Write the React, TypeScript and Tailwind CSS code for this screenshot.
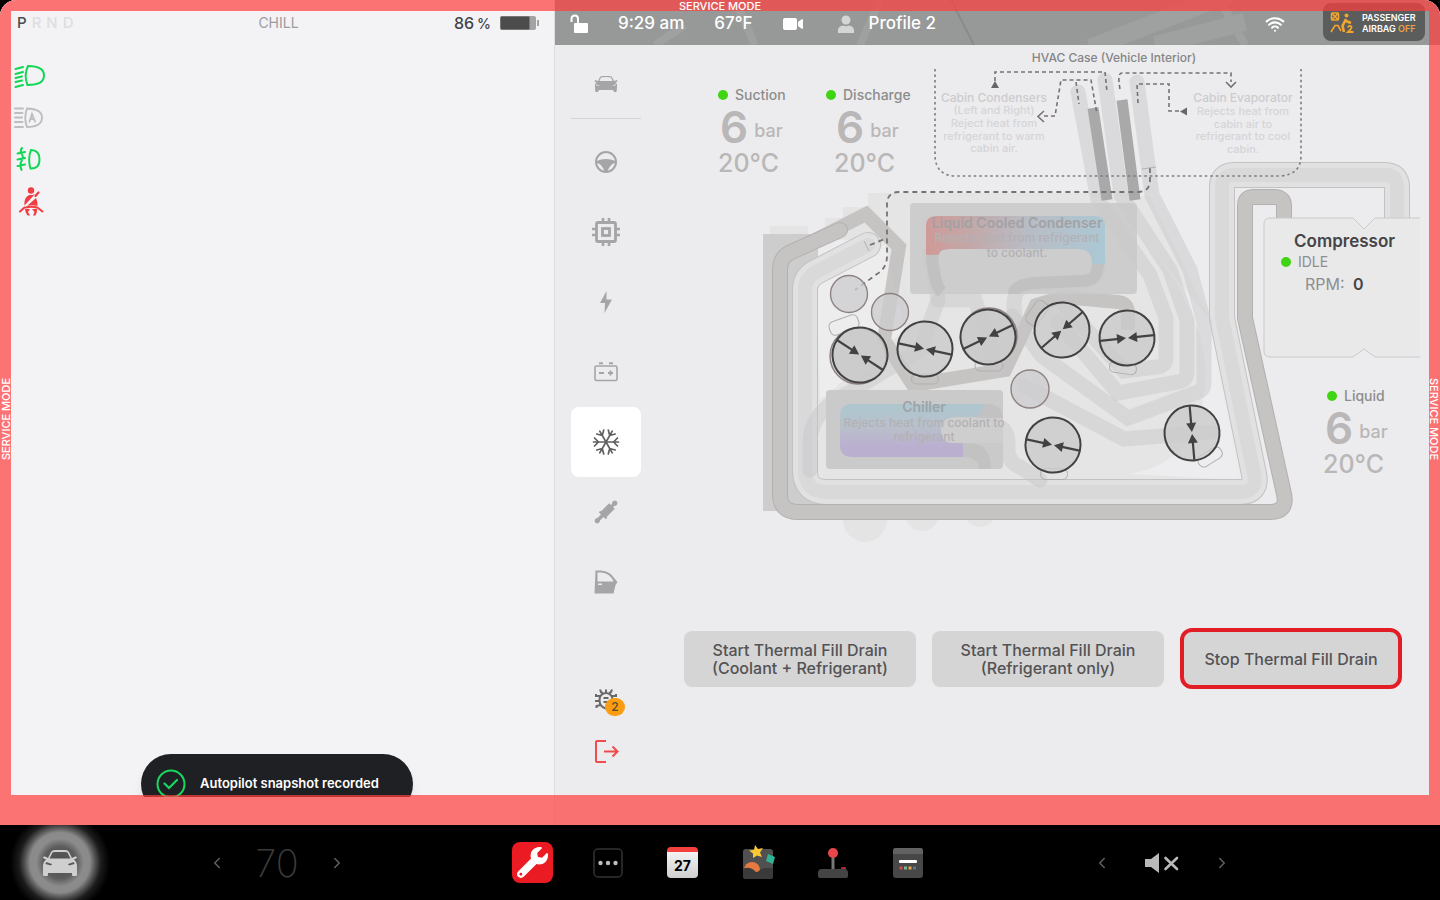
import React, { useState } from "react";
import { ChevronLeft, ChevronRight, Wifi } from "lucide-react";
import { FaWrench } from "react-icons/fa";

interface Valve {
	x: number;
	y: number;
	angle: number;
}

interface Tab {
	x: number;
	y: number;
	w: number;
	h: number;
	angle: number;
}

interface ReadingProps {
	label: string;
	pressure: number;
	temperature: string;
	className: string;
	valueClassName: string;
}

const valves: Valve[] = [
	{ x: 860, y: 355, angle: 33 },
	{ x: 925, y: 349, angle: 12 },
	{ x: 988, y: 337, angle: -26 },
	{ x: 1062, y: 330, angle: -41 },
	{ x: 1127, y: 338, angle: -6 },
	{ x: 1053, y: 445, angle: 12 },
	{ x: 1192, y: 433, angle: 85 },
];

const tabs: Tab[] = [
	{ x: 844, y: 325, w: 30, h: 14, angle: -20 },
	{ x: 925, y: 379, w: 27, h: 10, angle: 0 },
	{ x: 989, y: 366, w: 28, h: 10, angle: 0 },
	{ x: 1037, y: 313, w: 26, h: 14, angle: -55 },
	{ x: 1123, y: 368, w: 27, h: 11, angle: 8 },
	{ x: 1054, y: 474, w: 27, h: 11, angle: 0 },
	{ x: 1210, y: 457, w: 26, h: 12, angle: -32 },
];

const coolantLines = [
	"M1078 92 L1098 200 L1150 275 L1166 318 V358 Q1166 366 1157 367 L1124 371 L1062 302",
	"M1105 80 L1121 195 L1170 270 L1187 320 V372 Q1187 380 1178 382 L1118 393 L1058 322",
	"M1137 82 L1152 195 L1190 270 L1204 322 V382 Q1204 391 1195 393 L1128 418 L1042 356 L1012 316",
	"M1024 386 L1124 439 L1212 432",
	"M930 252 L938 300 L920 350 L850 392 Q812 410 810 440 V470",
	"M975 425 H992 Q1008 425 1008 445 V450 Q1008 462 1020 467 L1040 480",
	"M938 300 H975 L998 370",
	"M1100 262 Q1100 282 1080 282 L1030 285 Q1014 286 1014 305 L1016 330",
];

const lowPressureLine =
	"M868 245 L816 272 Q805 278 805 290 V470 Q805 492 827 492 H1240 Q1258 492 1254 474 L1222 318 V187 Q1222 175 1234 175 H1385 Q1397 175 1397 187 V240";
const highPressureLine =
	"M840 230 L789 253 Q780 258 780 270 V494 Q780 512 798 512 H1270 Q1288 512 1284 494 L1245 318 V205 Q1245 197 1254 197 H1274 Q1284 197 1284 206 V240";

function CarIcon({ className }: { className?: string }) {
	return (
		<svg viewBox="0 0 36 28" fill="currentColor" fillRule="evenodd" className={className} aria-hidden="true">
			<path d="M9 3 Q10 1 13 1 H23 Q26 1 27 3 L30 9 L33 7.500 Q35 7 35 9 L32 10.500 Q35 13 35 16 V26 Q35 27 34 27 H31 Q30 27 30 26 V24 H6 V26 Q6 27 5 27 H2 Q1 27 1 26 V16 Q1 13 4 10.500 L1 9 Q1 7 3 7.500 L6 9 Z M10.500 3.500 L7.500 9.500 H28.500 L25.500 3.500 Q25 3 23 3 H13 Q11 3 10.500 3.500 Z M4 13 L3.500 15 L9 16.500 L10 15 Z M32 13 L32.500 15 L27 16.500 L26 15 Z" />
		</svg>
	);
}

function SideCarIcon() {
	return (
		<svg viewBox="0 0 24 18" className="w-6" fill="currentColor" fillRule="evenodd" aria-hidden="true">
			<path d="M6 2 Q7 1 9 1 H15 Q17 1 18 2 L20 6 L23 5 L23.500 6.500 L21.500 7.500 L23 9 V13 L22.500 17 H20 L19 15 H5 L4 17 H1.500 L1 13 V9 L2.500 7.500 L.5 6.500 L1 5 L4 6 Z M7 2.500 L5.500 6 H18.500 L17 2.500 Q12 1.500 7 2.500 Z M2 9 L2.500 10.500 L6 11 Z M22 9 L21.500 10.500 L18 11 Z" />
		</svg>
	);
}

function SteeringIcon() {
	return (
		<svg viewBox="0 0 24 24" className="w-6" fill="none" stroke="currentColor" aria-hidden="true">
			<circle cx="12" cy="12" r="10" strokeWidth="2" />
			<path d="M2.500 11 Q12 7 21.500 11 V13 Q16.500 13 13.500 21.500 H10.500 Q7.500 13 2.500 13 Z" fill="currentColor" stroke="none" />
		</svg>
	);
}

function ChipIcon() {
	return (
		<svg viewBox="0 0 28 28" className="w-7" fill="none" stroke="currentColor" aria-hidden="true">
			<rect x="4.500" y="4.500" width="19" height="19" rx="1.500" strokeWidth="2.800" />
			<rect x="10.500" y="10.500" width="7" height="7" strokeWidth="2.800" />
			<path d="M11 0 V4 M17 0 V4 M11 24 V28 M17 24 V28 M0 11 H4 M0 17 H4 M24 11 H28 M24 17 H28" strokeWidth="2.600" />
		</svg>
	);
}

function BoltIcon() {
	return (
		<svg viewBox="0 0 14 22" className="h-[22px]" fill="currentColor" aria-hidden="true">
			<path d="M7.500 0 L1 12 H6 L5.500 22 L13 8.500 H7.500 Z" />
		</svg>
	);
}

function BatteryPackIcon() {
	return (
		<svg viewBox="0 0 24 20" className="w-6" fill="none" stroke="currentColor" strokeWidth="1.600" aria-hidden="true">
			<rect x="1" y="4" width="22" height="14.500" rx="1.500" />
			<path d="M5 1.200 H9 M15 1.200 H19 M5 11 H10 M14 11 H19 M16.500 8.500 V13.500" strokeWidth="1.900" />
		</svg>
	);
}

function SnowIcon() {
	return (
		<svg viewBox="-14 -14 28 28" className="w-7" fill="none" stroke="currentColor" strokeWidth="1.700" strokeLinecap="round" aria-hidden="true">
			{[0, 60, 120, 180, 240, 300].map((a) => (
				<path key={a} d="M0 0 H12.500 M7.500 0 L11.500 -4 M7.500 0 L11.500 4" transform={`rotate(${a})`} />
			))}
		</svg>
	);
}

function ShockIcon() {
	return (
		<svg viewBox="0 0 24 24" className="w-6" stroke="currentColor" fill="currentColor" aria-hidden="true">
			<path d="M4 20 L10 14" strokeWidth="3.800" strokeLinecap="round" />
			<circle cx="3.200" cy="20.800" r="2.200" />
			<path d="M8.500 15.500 L18 6" strokeWidth="8" />
			<path d="M5.500 11.500 L12.500 18.500" strokeWidth="2" />
			<path d="M16 8 L20 4" strokeWidth="3" />
			<circle cx="20.800" cy="3.200" r="2.200" />
		</svg>
	);
}

function DoorIcon() {
	return (
		<svg viewBox="0 0 24 24" className="w-6" fill="currentColor" fillRule="evenodd" aria-hidden="true">
			<path d="M1.500 .5 H7 Q16 1 20.500 8.500 L23.500 12 L21.500 15 L19.500 23.500 H.5 Z M3.500 2.500 V11.500 H19.500 Q16 3 7 2.500 Z M4 13.500 H8 V15 H4 Z" />
		</svg>
	);
}

function BugIcon() {
	return (
		<svg viewBox="0 0 24 24" className="w-6" fill="none" stroke="currentColor" strokeWidth="2" aria-hidden="true">
			<path d="M8 6.500 Q12 3.500 16 6.500 Q18.500 8 18.500 12 Q18.500 19 12 20.500 Q5.500 19 5.500 12 Q5.500 8 8 6.500 Z" />
			<path d="M6 1.500 Q6.500 4.500 9 5.500 M18 1.500 Q17.500 4.500 15 5.500 M2 6 V8 H6 M22 6 V8 H18 M1 13 H5.500 M23 13 H18.500 M2.500 20 V18 L6.500 17 M9.500 10 H14.500 M9.500 14 H14.500 M12 1.500 V5" />
		</svg>
	);
}

function ExitIcon() {
	return (
		<svg viewBox="0 0 26 26" className="w-[26px]" fill="none" stroke="currentColor" strokeWidth="2" aria-hidden="true">
			<path d="M13 2 H4 Q3 2 3 3 V22 Q3 23 4 23 H13 M11 12.500 H24.500 M19.500 7.500 L24.500 12.500 L19.500 17.500" />
		</svg>
	);
}

const sideItems = [
	{ id: "controls", label: "Controls", icon: SteeringIcon },
	{ id: "chassis", label: "Electronics", icon: ChipIcon },
	{ id: "voltage", label: "High voltage", icon: BoltIcon },
	{ id: "battery", label: "Low voltage", icon: BatteryPackIcon },
	{ id: "thermal", label: "Thermal", icon: SnowIcon },
	{ id: "suspension", label: "Suspension", icon: ShockIcon },
	{ id: "closures", label: "Closures", icon: DoorIcon },
];

function Telltales() {
	return (
		<div className="flex flex-col gap-3 pl-[14px] pt-[15px]">
			<svg viewBox="0 0 32 30" className="w-8" fill="none" stroke="#12d655" strokeWidth="2" strokeLinecap="round" aria-label="Low beam">
				<path d="M14 5 Q9.500 14.500 13.500 24 Q30 24 30 14.500 Q30 5 14 5 Z" />
				<path d="M1.500 8 L9 6 M1.500 13 L9 11 M1.500 17 L8 15.500 M1.500 21 L8 19.500 M1.500 26 L9 24" />
			</svg>
			<svg viewBox="0 0 32 30" className="w-8" fill="none" stroke="#bebebf" strokeWidth="1.900" strokeLinecap="round" aria-label="Auto high beam">
				<path d="M13 5.500 Q9.500 15 13 24 Q28 24 28 14.500 Q28 6 13 5.500 Z" />
				<path d="M1 5.500 H9 M1 10 H8.500 M1 14.500 H8 M1 19 H8.500 M1 24 H9" />
				<path d="M15.500 18.500 L18 11 L21 18.500 M16.500 16 H20" />
			</svg>
			<svg viewBox="0 0 32 30" className="w-8" fill="none" stroke="#12d655" strokeWidth="2" strokeLinecap="round" aria-label="Front fog">
				<path d="M17 5 Q13.500 14 16.500 23.500 Q25.500 24 25.500 14.500 Q25.500 5 17 5 Z" />
				<path d="M3.500 8.500 L11 7 M3.500 14.500 L11 13 M3.500 21 L11 19.500 M8 3 Q5.500 6 8 9.500 Q10 12 7.500 16 Q5.500 20 7.500 25" />
			</svg>
			<svg viewBox="-2 0 32 30" className="w-8" fill="#f23c41" aria-label="Seat belt">
				<circle cx="15" cy="3.500" r="3.200" />
				<path d="M13 8 L17 8 L19.500 6.500 L8.500 18.500 Q8 12 11 9.500 Z" />
				<path d="M20 11 Q22 15 21.500 19 Q16 17.500 11 19 Z" />
				<path d="M19.500 9 L22.500 5.500" stroke="#f23c41" strokeWidth="2.200" strokeLinecap="round" />
				<path d="M4 24.500 L8.500 20.500 M26.500 24.500 L22 21 M10 20.500 Q15.500 18.800 21 20.500" stroke="#f23c41" strokeWidth="2" strokeLinecap="round" fill="none" />
				<path d="M9 22 L14 22 L12 25 L14 28.500 H11.500 Q9 25 9 22 Z M21 22 L16 22 L18.500 25 L17 28.500 H19.500 Q21.500 25 21 22 Z" />
			</svg>
		</div>
	);
}

function DrivePanel() {
	return (
		<section className="relative w-[554px] shrink-0 overflow-hidden bg-[#f3f3f6] mb-7">
			<div className="grid grid-cols-3 items-center h-[46px] pl-[17px] pr-[14px] text-[15px]">
				<div className="flex gap-[5px] text-[#dedee0] font-medium">
					<span className="text-[#4b4b4c]">P</span>
					<span>R</span>
					<span>N</span>
					<span>D</span>
				</div>
				<div className="text-center text-sm text-[#9c9c9f]">CHILL</div>
				<div className="flex items-center justify-end gap-2 text-base font-medium text-[#444445]">
					<span>
						86<span className="pl-[3px] text-sm">%</span>
					</span>
					<svg viewBox="0 0 41 16" className="w-[41px]" aria-label="Battery">
						<rect x="1" y="1" width="36" height="14" rx="2" fill="#a4a3a3" />
						<rect x="1.500" y="1.500" width="29" height="13" rx="1" fill="#4d4c4c" />
						<rect x="38" y="5" width="2" height="6" fill="#a4a3a3" />
					</svg>
				</div>
			</div>
			<Telltales />
			<div
				role="status"
				className="absolute top-[754px] left-1/2 -translate-x-1/2 flex items-center gap-[14px] w-[272px] h-[60px] pl-[15px] rounded-full bg-[#1f2024] text-white text-[13px] font-semibold shadow-lg"
			>
				<svg viewBox="0 0 30 30" className="w-[30px]" fill="none" stroke="#17d860" strokeWidth="2" aria-hidden="true">
					<circle cx="15" cy="15" r="13.500" />
					<path d="M8.500 14.500 L13 19 L21 11" strokeLinecap="round" strokeWidth="2.200" />
				</svg>
				Autopilot snapshot recorded
			</div>
		</section>
	);
}

function StatusBar() {
	return (
		<header className="relative flex items-center h-[45px] shrink-0 pl-[15px] pr-[15px] pt-[2px] overflow-hidden bg-[#979898] text-white">
			<svg viewBox="0 0 885 45" className="absolute inset-0 h-full w-full" preserveAspectRatio="none" fill="none" stroke="#9fa0a0" aria-hidden="true">
				<path d="M100 45 L130 25 M180 0 L200 45 M325 0 L305 45 M665 0 L690 45" strokeWidth="8" />
				<path d="M535 48 L690 -12 M600 45 L690 22" strokeWidth="18" />
				<path d="M396 0 L419 45" stroke="#898a8a" strokeWidth="2" />
			</svg>
			<div className="relative flex flex-1 items-center gap-[30px] text-[17px] font-medium">
				<svg viewBox="0 0 18 20" className="w-[18px]" aria-label="Unlocked">
					<path d="M1.500 8 V5 Q1.500 1.500 5 1.500 Q8 1.500 8 5 V9" fill="none" stroke="white" strokeWidth="2" />
					<rect x="4" y="9" width="14" height="10" rx="1" fill="white" />
				</svg>
				<span>9:29 am</span>
				<span>67°F</span>
				<svg viewBox="0 0 20 14" className="w-5" fill="white" aria-label="Dashcam">
					<rect y="1" width="14" height="12" rx="2" />
					<path d="M15 5 L19 2 Q20 2 20 3 V11 Q20 12 19 12 L15 9 Z" />
				</svg>
				<button type="button" className="flex items-center gap-[14px] pl-1">
					<svg viewBox="0 0 18 20" className="w-[18px]" fill="#d5d5d5" aria-hidden="true">
						<circle cx="9" cy="6" r="4.500" />
						<path d="M1 19 Q0 12 6 11.500 Q9 13 12 11.500 Q18 12 17 19 Z" />
					</svg>
					Profile 2
				</button>
			</div>
			<Wifi className="relative mr-[38px]" size={20} strokeWidth={2.5} aria-label="Wi-Fi" />
			<div className="relative -mt-1 flex items-center gap-[7px] h-[38px] w-[102px] pl-[7px] pt-[3px] rounded-lg bg-[#5b5c5c] text-[9px] leading-[11px] font-semibold">
				<svg viewBox="0 0 25 22" className="w-[25px] shrink-0" fill="none" stroke="#f3a52f" strokeWidth="1.600" aria-hidden="true">
					<rect x="1.500" y="1" width="7" height="7" rx="1" />
					<path d="M1.500 1 L8.500 8 M8.500 1 L1.500 8 M1 20 L5 13.500 L8 13.500 L11 19" />
					<circle cx="16.500" cy="3.500" r="2" fill="#f3a52f" stroke="none" />
					<path d="M16 7 L12.500 14 L14 20 M16 9 L21 11" strokeWidth="2.600" />
					<path d="M18 15.500 Q18.500 13.500 20.500 14 Q23.500 15 18 20 H23.500" strokeWidth="1.800" />
				</svg>
				<span>
					PASSENGER
					<br />
					AIRBAG <span className="text-[#e9a343]">OFF</span>
				</span>
			</div>
		</header>
	);
}

function SideNav() {
	const [active, setActive] = useState("thermal");

	return (
		<nav className="flex flex-col items-center w-[102px] shrink-0 pt-1 pb-[47px] text-[#a5a5a7]">
			<button type="button" aria-label="Vehicle" className="flex items-center justify-center w-[70px] h-[70px] mb-2 border-b border-[#d4d4d6]">
				<SideCarIcon />
			</button>
			{sideItems.map(({ id, label, icon: Icon }) => (
				<button
					key={id}
					type="button"
					aria-label={label}
					onClick={() => setActive(id)}
					className={`flex items-center justify-center w-[70px] h-[70px] rounded-lg ${
						active === id ? "bg-white text-[#5f5f60]" : ""
					}`}
				>
					<Icon />
				</button>
			))}
			<button type="button" aria-label="Alerts" className="mt-auto flex items-center justify-center w-[70px] h-[52px] text-[#69696a]">
				<span className="relative">
					<BugIcon />
					<span className="absolute left-[11px] top-[10px] flex items-center justify-center w-5 h-[18px] rounded-full bg-[#fb9d12] text-[#5e4a2a] text-xs font-medium">
						2
					</span>
				</span>
			</button>
			<button type="button" aria-label="Exit service mode" className="flex items-center justify-center w-[70px] h-[52px] text-[#ef4c4c]">
				<ExitIcon />
			</button>
		</nav>
	);
}

function Reading({ label, pressure, temperature, className, valueClassName }: ReadingProps) {
	return (
		<div className={`absolute w-28 ${className}`}>
			<div className="flex items-center gap-[7px] text-sm leading-5 font-medium text-[#8d8c8d]">
				<span className="w-[10px] h-[10px] rounded-full bg-[#3fd512]" />
				{label}
			</div>
			<div className={`text-[#b9b7b7] ${valueClassName}`}>
				<div className="flex items-end gap-[6px] pl-[2px]">
					<span className="text-[44px] leading-[44px] font-semibold">{pressure}</span>
					<span className="pb-1 text-lg leading-7 font-medium">bar</span>
				</div>
				<div className="text-[25px] leading-7 font-medium">{temperature}</div>
			</div>
		</div>
	);
}

function Schematic() {
	return (
		<svg viewBox="657 45 772 510" className="w-[772px] h-[510px]" fill="none" aria-label="Refrigerant circuit">
			<defs>
				<linearGradient id="condenser" x1="0" x2="1" y1="0" y2="0">
					<stop offset="0" stopColor="#cf9a97" />
					<stop offset="0.25" stopColor="#c3a8a8" />
					<stop offset="0.55" stopColor="#b9bcc4" />
					<stop offset="1" stopColor="#abc8d4" />
				</linearGradient>
				<linearGradient id="chiller" x1="0" x2="0" y1="0" y2="1">
					<stop offset="0.1" stopColor="#b0c6cf" />
					<stop offset="0.45" stopColor="#b9bfcb" />
					<stop offset="0.8" stopColor="#bbafd0" />
				</linearGradient>
			</defs>

			{/* car body silhouette */}
			<g fill="#e4e4e5">
				<circle cx="865" cy="520" r="22" />
				<circle cx="922" cy="514" r="17" />
				<circle cx="980" cy="511" r="16" />
				<path d="M770 226 H808 V234 H825 V218 H843 V207 H868 V193 H1140 V240 H770 Z" />
			</g>
			<path d="M817 288 Q817 275 830 270 L880 240 V196 H1150 L1209 318 L1240 480 H832 Q817 480 817 465 Z" fill="#e5e5e6" />
			<path d="M817 300 Q817 275 835 268 L885 245 L905 330 L820 400 Z" fill="#ededee" />
			<path d="M1145 240 L1209 318 L1240 480 L1130 474 Q1210 460 1205 360 Q1195 300 1145 240 Z" fill="#ededef" />

			<rect x="763" y="234" width="55" height="277" fill="#cdcdce" />

			{/* low pressure line, light */}
			<g strokeLinejoin="round" strokeLinecap="round">
				<path d={lowPressureLine} stroke="#c2c2c3" strokeWidth="26" />
				<path d={lowPressureLine} stroke="#e1e1e2" strokeWidth="24" />
				<path d={lowPressureLine} stroke="#d9d9da" strokeWidth="14" />
			</g>

			{/* high pressure line, dark */}
			<path d="M784 256 L866 214 L899 247 L884 340 L913 385 L1005 370 L1036 305 L1063 297 L1118 302 Q1128 303 1128 313 V330" stroke="#bebbb9" strokeOpacity="0.8" strokeWidth="14" />
			<path d={highPressureLine} stroke="#b3b1b0" strokeWidth="16" strokeLinecap="round" />
			<path d={highPressureLine} stroke="#c6c4c2" strokeWidth="14" strokeLinecap="round" />

			<g stroke="#c6c6c7" strokeOpacity="0.45" strokeWidth="15" strokeLinecap="round">
				{coolantLines.map((d) => (
					<path key={d} d={d} />
				))}
			</g>
			<path d="M1093 108 L1107 200 M1122 100 L1135 200" stroke="#a9a9a9" strokeWidth="11" />

			{/* liquid cooled condenser */}
			<rect x="910" y="203" width="227" height="91" rx="4" fill="#cacaca" fillOpacity="0.9" />
			<path d="M926 255 V226 Q926 216 936 216 H1095 Q1105 216 1105 226 V264 H1092 Q1092 249 1078 249 H950 Q939 249 939 255 Z" fill="url(#condenser)" />
			<path d="M932 255 Q934 285 942 292 M1098 264 Q1098 282 1080 281 L1035 283 Q1014 285 1014 294" stroke="#c1c1c1" strokeWidth="12" />

			{/* chiller */}
			<rect x="826" y="390" width="177" height="79" rx="4" fill="#cacaca" />
			<path d="M852 404 H985 V417 H954 Q941 418 941 430 Q941 443 954 443 H963 V457 H852 Q840 457 840 445 V416 Q840 404 852 404 Z" fill="url(#chiller)" />
			<path d="M985 404 Q1003 404 1003 418 H954 Q941 418 941 430 Q941 443 954 443 H970 Q990 443 991 469 H979 Q979 457 963 457 V443" fill="#c2c2c2" />
			<path d="M1003 418 H954 Q941 418 941 430 Q941 443 954 443 H1003 Z" fill="#cecece" />

			{/* refrigerant path */}
			<g stroke="#777172" strokeWidth="1.600" strokeDasharray="4 3">
				<path d="M935 69 V156 Q936 176 956 176 H1281 Q1301 174 1301 156 V69" stroke="#827a7c" strokeDasharray="2.500 3" />
				<path d="M995 81 V72 H1105 L1107 92" />
				<path d="M1044 116 H1055 L1061 80 H1091 L1097 114 M1076 82 L1079 104" />
				<path d="M1120 89 Q1117 73 1122 73 H1231 V82" />
				<path d="M1138 103 L1137 84 H1169 V111 H1180" />
				<path d="M1150 168 V180 Q1150 192 1138 192 H898 Q887 193 887 204 V256 Q887 268 877 274 L855 290 M870 245 L887 238" strokeWidth="1.800" strokeDasharray="5 4" />
			</g>
			<path d="M991 88 L995 81 L999 88 Z M1187 107.500 V115.500 L1180 111.500 Z" fill="#69656a" />
			<path d="M1044 111 L1038 116.500 L1044 122 M1226 82 L1231 87 L1236 82" stroke="#777172" strokeWidth="1.600" />
			<path d="M1142 169 L1156 167 M864 241 L869 251" stroke="#b2b0b0" />

			{/* circuit nodes */}
			<g stroke="#8d8182" strokeWidth="1.400" fill="#cdccce" fillOpacity="0.8">
				<circle cx="849" cy="294" r="18.500" />
				<circle cx="890" cy="312" r="18.500" />
				<circle cx="1030" cy="389" r="19" />
				<circle cx="858" cy="356" r="28" />
				<circle cx="989" cy="336" r="28" />
			</g>
			{tabs.map((t) => (
				<rect
					key={`${t.x}-${t.y}`}
					x={t.x - t.w / 2}
					y={t.y - t.h / 2}
					width={t.w}
					height={t.h}
					rx="5"
					stroke="#b0aeaf"
					transform={`rotate(${t.angle} ${t.x} ${t.y})`}
				/>
			))}
			{valves.map((v) => (
				<g key={`${v.x}-${v.y}`} transform={`translate(${v.x} ${v.y}) rotate(${v.angle})`}>
					<circle r="27.500" fill="#cacaca" fillOpacity="0.8" stroke="#434242" strokeWidth="2" />
					<path d="M-27 0 H-8 M27 0 H8" stroke="#434242" strokeWidth="2.200" />
					<path d="M-1 0 L-10 -5 V5 Z M1 0 L10 -5 V5 Z" fill="#434242" />
				</g>
			))}

			{/* compressor card outline */}
			<path d="M1420 218 H1375 L1364 229 L1353 218 H1270 Q1264 218 1264 224 V351 Q1264 357 1270 357 H1353 L1364 349 L1375 357 H1420" fill="#e9e9ea" stroke="#cacacb" />

			<g textAnchor="middle" fontWeight="500">
				<text x="1114" y="62" fontSize="12" fill="#858486">HVAC Case (Vehicle Interior)</text>
				<g fill="#d5d4d6" fontSize="11">
					<text x="994" y="102" fontSize="12" fill="#cccbcd">Cabin Condensers</text>
					<text x="994" y="114">(Left and Right)</text>
					<text x="994" y="127">Reject heat from</text>
					<text x="994" y="140">refrigerant to warm</text>
					<text x="994" y="152">cabin air.</text>
					<text x="1243" y="102" fontSize="12" fill="#cccbcd">Cabin Evaporator</text>
					<text x="1243" y="115">Rejects heat from</text>
					<text x="1243" y="128">cabin air to</text>
					<text x="1243" y="140">refrigerant to cool</text>
					<text x="1243" y="153">cabin.</text>
				</g>
				<g fill="#b3b1b4" fontSize="12">
					<text x="1017" y="228" fontSize="14" fill="#a3a1a5" fontWeight="600">Liquid Cooled Condenser</text>
					<text x="1017" y="242">Rejects heat from refrigerant</text>
					<text x="1017" y="257">to coolant.</text>
					<text x="924" y="412" fontSize="14" fill="#9da3a8" fontWeight="600">Chiller</text>
					<text x="924" y="427">Rejects heat from coolant to</text>
					<text x="924" y="441">refrigerant</text>
				</g>
			</g>
		</svg>
	);
}

function ThermalPage() {
	return (
		<main className="flex-1 min-w-0 pr-[11px]">
			<div className="relative w-[772px]">
				<Schematic />
				<Reading label="Suction" pressure={6} temperature="20°C" className="left-[61px] top-[40px]" valueClassName="" />
				<Reading label="Discharge" pressure={6} temperature="20°C" className="left-[169px] top-[40px]" valueClassName="pl-2" />
				<Reading label="Liquid" pressure={6} temperature="20°C" className="left-[670px] top-[341px]" valueClassName="-ml-1" />
				<div className="absolute left-[624px] top-[185px] text-[#8f8e90]">
					<h2 className="pl-[13px] text-[17px] leading-[22px] font-semibold text-[#454446]">Compressor</h2>
					<div className="flex items-center gap-[7px] text-sm leading-5">
						<span className="w-[10px] h-[10px] rounded-full bg-[#3fd512]" />
						IDLE
					</div>
					<div className="pl-6 text-base leading-6">
						RPM: <span className="pl-1 font-semibold text-[#454446]">0</span>
					</div>
				</div>
			</div>
			<div className="flex items-center gap-4 mt-[73px] pl-[27px] pr-[27px] text-base leading-[18px] font-medium text-[#535254]">
				<button type="button" className="w-[232px] h-14 rounded-lg bg-[#d5d5d5]">
					Start Thermal Fill Drain
					<br />
					(Coolant + Refrigerant)
				</button>
				<button type="button" className="w-[232px] h-14 rounded-lg bg-[#d5d5d5]">
					Start Thermal Fill Drain
					<br />
					(Refrigerant only)
				</button>
				<button type="button" className="flex-1 h-[61px] rounded-xl border-4 border-[#e21d26] bg-[#d5d5d5]">
					Stop Thermal Fill Drain
				</button>
			</div>
		</main>
	);
}

function ServiceFrame() {
	return (
		<div className="pointer-events-none absolute inset-0 border-x-[11px] border-t-[11px] border-b-[30px] border-[#ff3e3eb5] text-[11px] leading-[13px] font-medium text-white">
			<span className="absolute -top-[11px] left-1/2 -translate-x-1/2">SERVICE MODE</span>
			<span className="absolute -left-[11px] top-[408px] -translate-y-1/2 rotate-180 [writing-mode:vertical-rl]">SERVICE MODE</span>
			<span className="absolute -right-[11px] top-[408px] -translate-y-1/2 [writing-mode:vertical-rl]">SERVICE MODE</span>
		</div>
	);
}

function Stepper({ label, children }: { label: string; children: React.ReactNode }) {
	return (
		<div className="flex items-center justify-between w-[138px]">
			<button type="button" aria-label={`${label} down`}>
				<ChevronLeft size={18} className="text-[#606060]" />
			</button>
			{children}
			<button type="button" aria-label={`${label} up`}>
				<ChevronRight size={18} className="text-[#606060]" />
			</button>
		</div>
	);
}

function Dock() {
	const slot = "flex items-center justify-center w-[75px] h-[75px]";

	return (
		<footer className="grid grid-cols-[1fr_auto_1fr] items-center h-[75px] bg-black">
			<div className="flex items-center gap-[98px] pl-[10px]">
				<button
					type="button"
					aria-label="Car"
					className="flex items-center justify-center w-[100px] h-[75px] bg-[radial-gradient(circle,#4c4c4c_0px,#5c5c5c_16px,#8c8c8c_24px,#8a8a8a_30px,#555_35px,#1c1c1c_41px,#000_50px)] text-[#cfcfcf]"
				>
					<CarIcon className="w-9" />
				</button>
				<Stepper label="Temperature">
					<span className="text-[38px] leading-10 font-extralight text-[#3a3a3a]">70</span>
				</Stepper>
			</div>
			<div className="flex">
				<button type="button" aria-label="Service" className={slot}>
					<span className="flex items-center justify-center w-[41px] h-[41px] rounded-lg bg-[#ea1b23] text-white">
						<FaWrench size={31} />
					</span>
				</button>
				<button type="button" aria-label="All apps" className={slot}>
					<svg viewBox="0 0 30 30" className="w-[30px]" fill="#bdbdbd" aria-hidden="true">
						<rect x="1" y="1" width="28" height="28" rx="4" fill="none" stroke="#333" strokeWidth="1.500" />
						<circle cx="7.500" cy="15" r="2.200" />
						<circle cx="15" cy="15" r="2.200" />
						<circle cx="22.500" cy="15" r="2.200" />
					</svg>
				</button>
				<button type="button" aria-label="Calendar" className={slot}>
					<span className="flex items-center justify-center w-[31px] h-[31px] pt-px rounded-sm border-t-[5px] border-[#f3413f] bg-linear-to-b from-[#f3f3f3] to-[#cfcfcf] text-sm font-bold text-black">
						27
					</span>
				</button>
				<button type="button" aria-label="Toybox" className={slot}>
					<svg viewBox="0 0 36 36" className="w-9" aria-hidden="true">
						<rect x="3" y="4" width="30" height="30" rx="3" fill="#505050" />
						<circle cx="12" cy="25" r="8" fill="#e57b43" />
						<path d="M3 24 Q8 21 14 25 Q16 29 20 25 Q22 23 25 23 H33 V31 Q33 34 30 34 H6 Q3 34 3 31 Z" fill="#3a3a3a" />
						<path d="M15 0 L18 4 L23 3 L20 7.500 L22 12 L17 10.500 L13 13 L13 8.500 L9 5.500 L14 5 Z" fill="#fbc834" />
						<path d="M28 9 L35 12 L33 19 L26 16 Z" fill="#2fb497" />
					</svg>
				</button>
				<button type="button" aria-label="Arcade" className={slot}>
					<svg viewBox="0 0 32 32" className="w-8" aria-hidden="true">
						<rect x="14.500" y="8" width="3" height="16" fill="#777" />
						<circle cx="16" cy="6" r="5" fill="#e8464a" />
						<rect x="24" y="20" width="5" height="3" rx="1" fill="#a82a2c" />
						<path d="M1 26 Q1 22 5 22 H27 Q31 22 31 26 V29 Q31 31 29 31 H3 Q1 31 1 29 Z" fill="#444" />
					</svg>
				</button>
				<button type="button" aria-label="Radio" className={slot}>
					<svg viewBox="0 0 30 30" className="w-[30px]" aria-hidden="true">
						<rect width="30" height="30" rx="3" fill="#474747" />
						<path d="M0 6 V3 Q0 0 3 0 H27 Q30 0 30 3 V6 Z" fill="#626262" />
						<rect x="6" y="12" width="18" height="3" rx="1" fill="#fff" />
						<rect x="6.500" y="18.500" width="3" height="3" fill="#d14c50" />
						<rect x="11" y="18.500" width="3" height="3" fill="#7ab893" />
						<rect x="15.500" y="18.500" width="3" height="3" fill="#e6a64b" />
						<rect x="20" y="18.500" width="3" height="3" fill="#5c7596" />
					</svg>
				</button>
			</div>
			<div className="flex justify-end pr-[209px]">
				<Stepper label="Volume">
					<svg viewBox="0 0 34 22" className="w-[34px]" fill="#b9b9b9" stroke="#b9b9b9" aria-label="Muted">
						<path d="M0 7 H6 L14 1 V21 L6 15 H0 Z" stroke="none" />
						<path d="M20.500 6 L32 17 M32 6 L20.500 17" strokeWidth="2.600" strokeLinecap="round" />
					</svg>
				</Stepper>
			</div>
		</footer>
	);
}

export default function App() {
	return (
		<div className="flex flex-col min-h-screen bg-black font-['Inter',sans-serif]">
			<div className="relative flex flex-1 rounded-t-2xl overflow-hidden bg-[#f3f3f6]">
				<DrivePanel />
				<div className="flex flex-col flex-1 min-w-0 border-l border-[#dededf] bg-[#ececee]">
					<StatusBar />
					<div className="flex flex-1">
						<SideNav />
						<ThermalPage />
					</div>
				</div>
				<ServiceFrame />
			</div>
			<Dock />
		</div>
	);
}
